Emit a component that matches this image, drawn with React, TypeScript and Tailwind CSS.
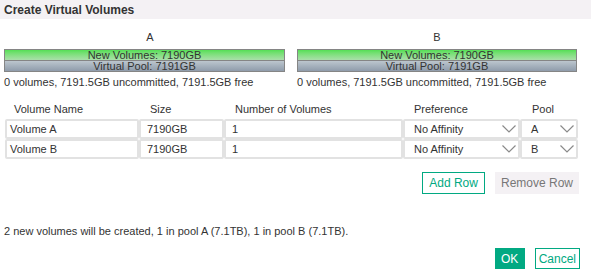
import React from "react";

const Chevron = () => (
  <svg width="14" height="8" viewBox="0 0 14 8" className="shrink-0">
    <path d="M0.5 0.5 L7 7 L13.5 0.5" fill="none" stroke="#8a8a8a" strokeWidth="1.2" />
  </svg>
);

const PoolCol = ({ label, labelPad }: { label: string; labelPad: string }) => (
  <div className="flex flex-col">
    <div className={`h-[13px] leading-[13px] text-center ${labelPad}`}>{label}</div>
    <div className="mt-[5px] border border-[#858585] flex flex-col">
      <div className="h-[11px] leading-[11px] text-center bg-gradient-to-b from-[#55df55] to-[#a9dfa9] border-b border-[#858585]">
        New Volumes: 7190GB
      </div>
      <div className="h-[10px] leading-[10px] text-center bg-gradient-to-b from-[#bcc6ce] to-[#8f9cab]">
        Virtual Pool: 7191GB
      </div>
    </div>
    <div className="mt-[4px] h-[13px] leading-[13px] whitespace-nowrap">
      0 volumes, 7191.5GB uncommitted, 7191.5GB free
    </div>
  </div>
);

const Cell = ({ children, pl, sel }: { children: React.ReactNode; pl: string; sel?: boolean }) => (
  <div
    className={`h-[20px] border-2 border-[#e2e2e2] rounded-[2px] flex items-center justify-between ${pl} ${sel ? "pr-[2px]" : ""}`}
  >
    <span>{children}</span>
    {sel && <Chevron />}
  </div>
);

export default function App() {
  return (
    <div
      className="w-[591px] h-[276px] bg-white text-[#333] text-[11px] overflow-hidden"
      style={{ fontFamily: '"Liberation Sans", Arial, sans-serif' }}
    >
      <div className="h-[19px] bg-[#f4f1f4] flex items-center pl-[4px] text-[12px] font-bold text-[#333]">
        Create Virtual Volumes
      </div>

      <div className="pl-[4px] pt-[12px] grid grid-cols-[281px_280px] gap-x-[12px]">
        <PoolCol label="A" labelPad="pl-[11px]" />
        <PoolCol label="B" labelPad="" />
      </div>

      <div className="mt-[12px] ml-[5px] grid grid-cols-[134px_85px_179px_117px_58px]">
        <div className="h-[18px] leading-[13px] pt-[2px] pl-[9px]">Volume Name</div>
        <div className="h-[18px] leading-[13px] pt-[2px] pl-[11px]">Size</div>
        <div className="h-[18px] leading-[13px] pt-[2px] pl-[11px]">Number of Volumes</div>
        <div className="h-[18px] leading-[13px] pt-[2px] pl-[11px]">Preference</div>
        <div className="h-[18px] leading-[13px] pt-[2px] pl-[12px]">Pool</div>

        <Cell pl="pl-[3px]">Volume A</Cell>
        <Cell pl="pl-[6px]">7190GB</Cell>
        <Cell pl="pl-[6px]">1</Cell>
        <Cell pl="pl-[9px]" sel>No Affinity</Cell>
        <Cell pl="pl-[9px]" sel>A</Cell>

        <Cell pl="pl-[3px]">Volume B</Cell>
        <Cell pl="pl-[6px]">7190GB</Cell>
        <Cell pl="pl-[6px]">1</Cell>
        <Cell pl="pl-[9px]" sel>No Affinity</Cell>
        <Cell pl="pl-[9px]" sel>B</Cell>
      </div>

      <div className="mt-[13px] flex justify-end gap-[10px] pr-[12px] text-[12px]">
        <button className="h-[22px] px-[6px] border border-[#01a982] text-[#01a982] bg-white leading-none">
          Add Row
        </button>
        <button className="h-[22px] px-[6px] bg-[#f4f1f4] text-[#777] leading-none">Remove Row</button>
      </div>

      <div className="mt-[31px] pl-[4px] h-[13px] leading-[13px]">
        2 new volumes will be created, 1 in pool A (7.1TB), 1 in pool B (7.1TB).
      </div>

      <div className="mt-[10px] flex justify-end gap-[10px] pr-[11px] text-[12px]">
        <button className="h-[21px] w-[30px] bg-[#01a982] text-white leading-none">OK</button>
        <button className="h-[21px] px-[3px] border border-[#01a982] text-[#01a982] bg-white leading-none">
          Cancel
        </button>
      </div>
    </div>
  );
}
